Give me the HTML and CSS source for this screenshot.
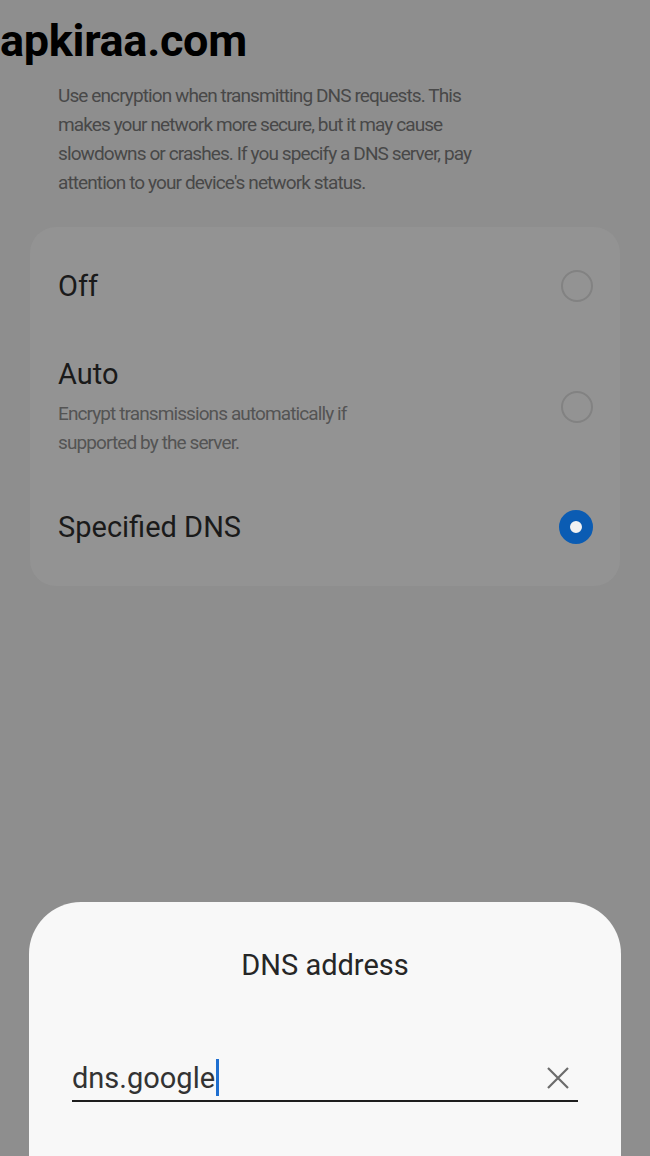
FILE: index.html
```html
<!DOCTYPE html>
<html lang="en">
<head>
    <meta charset="UTF-8">
    <meta name="viewport" content="width=device-width, initial-scale=1.0">
    <title>Private DNS</title>
    <link rel="stylesheet" href="styles.css">
</head>
<body>
    <div class="site-name">apkiraa.com</div>

    <p class="description">Use encryption when transmitting DNS requests. This<br>makes your network more secure, but it may cause<br>slowdowns or crashes. If you specify a DNS server, pay<br>attention to your device's network status.</p>

    <div class="options">
        <div class="option">
            <div class="option-text">
                <div class="option-title">Off</div>
            </div>
            <span class="radio"></span>
        </div>
        <div class="option">
            <div class="option-text">
                <div class="option-title">Auto</div>
                <div class="option-sub">Encrypt transmissions automatically if<br>supported by the server.</div>
            </div>
            <span class="radio"></span>
        </div>
        <div class="option">
            <div class="option-text">
                <div class="option-title">Specified DNS</div>
            </div>
            <span class="radio checked"></span>
        </div>
    </div>

    <div class="dialog">
        <div class="dialog-title">DNS address</div>
        <div class="field">
            <div class="field-value">dns.google<span class="cursor"></span></div>
            <svg class="clear" width="24" height="24" viewBox="0 0 24 24">
                <path d="M2 2 L22 22 M22 2 L2 22" stroke="#6b6b6b" stroke-width="2.2" fill="none"/>
            </svg>
        </div>
    </div>
</body>
</html>
```

FILE: styles.css
```css
body {
    margin: 0;
    background-color: #8e8e8e;
    font-family: Roboto, "Noto Sans", sans-serif;
    color: #1c1c1c;
    height: 1156px;
    overflow: hidden;
}
.site-name {
    font-size: 45px;
    font-weight: bold;
    line-height: 52px;
    color: #000;
    padding-top: 15px;
    letter-spacing: -0.3px;
}
.description {
    margin: 14px 20px 0 58px;
    font-size: 19px;
    line-height: 29px;
    letter-spacing: -0.9px;
    color: #484848;
}
.options {
    margin: 30px 30px 0 30px;
    padding: 15px 0;
    background-color: #939393;
    border-radius: 26px;
}
.option {
    display: flex;
    align-items: center;
    padding: 26px 27px 26px 28px;
}
.option-text {
    flex: 1;
}
.option-title {
    font-size: 29px;
    line-height: 36px;
    color: #1a1a1a;
}
.option-sub {
    margin-top: 7px;
    font-size: 19px;
    line-height: 29px;
    letter-spacing: -0.9px;
    color: #545454;
}
.radio {
    width: 28px;
    height: 28px;
    border: 2px solid #828282;
    border-radius: 50%;
    box-sizing: content-box;
}
.radio.checked {
    width: 12px;
    height: 12px;
    border: 11px solid #0b5cb3;
    background-color: #f2f2f2;
}
.dialog {
    position: fixed;
    left: 29px;
    right: 29px;
    bottom: 0;
    height: 254px;
    background-color: #f8f8f8;
    border-radius: 52px 52px 0 0;
    padding: 45px 43px 0 43px;
    box-sizing: border-box;
}
.dialog-title {
    text-align: center;
    font-size: 29px;
    line-height: 36px;
    color: #262626;
}
.field {
    display: flex;
    align-items: center;
    margin-top: 76px;
    padding-bottom: 4px;
    border-bottom: 2px solid #1e1e1e;
}
.field-value {
    flex: 1;
    font-size: 29px;
    line-height: 36px;
    color: #333;
}
.cursor {
    display: inline-block;
    width: 3px;
    height: 37px;
    margin-left: 1px;
    vertical-align: -8px;
    background-color: #1f6fd0;
}
.clear {
    margin-right: 8px;
}
```
